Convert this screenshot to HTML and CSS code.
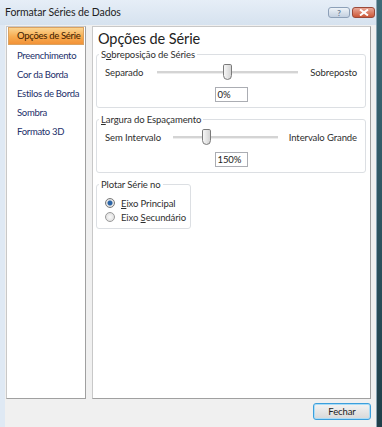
FILE: index.html
```html
<!DOCTYPE html>
<html lang="pt">
<head>
    <meta charset="UTF-8">
    <title>Formatar Séries de Dados</title>
    <link rel="stylesheet" href="styles.css">
</head>
<body>
    <div class="screen">
        <div class="dialog">
            <div class="titlebar">
                <span class="title">Formatar Séries de Dados</span>
                <div class="caption-buttons">
                    <span class="cap-btn help">?</span>
                    <span class="cap-btn close">
                        <svg width="10" height="7" viewBox="0 0 10 7"><path d="M1 0.5 L9 6.5 M9 0.5 L1 6.5" stroke="#fff" stroke-width="2"/></svg>
                    </span>
                </div>
            </div>

            <div class="content">
                <ul class="nav">
                    <li class="active">Opções de Série</li>
                    <li>Preenchimento</li>
                    <li>Cor da Borda</li>
                    <li>Estilos de Borda</li>
                    <li>Sombra</li>
                    <li>Formato 3D</li>
                </ul>

                <div class="panel">
                    <h1>Opções de Série</h1>

                    <fieldset class="group">
                        <legend>S<u>o</u>breposição de Séries</legend>
                        <div class="slider-row">
                            <span class="min-label overlap">Separado</span>
                            <div class="track track-wide"><span class="thumb" style="left: 66px"></span></div>
                            <span class="max-label">Sobreposto</span>
                        </div>
                        <div class="value"><span class="textbox">0%</span></div>
                    </fieldset>

                    <fieldset class="group">
                        <legend><u>L</u>argura do Espaçamento</legend>
                        <div class="slider-row">
                            <span class="min-label gap">Sem Intervalo</span>
                            <div class="track track-narrow"><span class="thumb" style="left: 29px"></span></div>
                            <span class="max-label">Intervalo Grande</span>
                        </div>
                        <div class="value"><span class="textbox">150%</span></div>
                    </fieldset>

                    <fieldset class="group small">
                        <legend>Plotar Série no</legend>
                        <label class="radio"><span class="dot checked"></span><span><u>E</u>ixo Principal</span></label>
                        <label class="radio"><span class="dot"></span><span>Eixo <u>S</u>ecundário</span></label>
                    </fieldset>
                </div>
            </div>

            <div class="footer">
                <button class="btn">Fechar</button>
            </div>
        </div>
        <div class="outside"></div>
    </div>
</body>
</html>
```

FILE: styles.css
```css
body {
    margin: 0;
    font-family: Lato, "Open Sans", sans-serif;
    font-size: 9.5px;
    letter-spacing: -0.1px;
    color: #2e2e2e;
}

.screen {
    display: flex;
    width: 382px;
    height: 427px;
    overflow: hidden;
}

.dialog {
    width: 376px;
    height: 427px;
    display: flex;
    flex-direction: column;
    background: #dfe9f4;
    box-sizing: border-box;
    padding: 0 0 0 5px;
}

.outside {
    flex: 1;
    background: linear-gradient(#3d6a78, #1f3f4a);
    border-left: 1px solid #8aa4b4;
}

.titlebar {
    height: 25px;
    display: flex;
    align-items: flex-start;
    justify-content: space-between;
    margin-left: -5px;
    padding: 0 1px 0 5px;
    box-sizing: border-box;
    background: linear-gradient(#e6eef7, #d6e2ef);
}

.title {
    font-size: 10.5px;
    line-height: 25px;
    color: #1e1e1e;
}

.caption-buttons {
    display: flex;
    gap: 2px;
    padding-top: 7px;
}

.cap-btn {
    height: 11px;
    display: flex;
    align-items: center;
    justify-content: center;
    border: 1px solid #8da0b8;
    border-radius: 3px;
    box-sizing: border-box;
}

.help {
    width: 22px;
    font-size: 8px;
    font-weight: bold;
    color: #6a7f96;
    background: linear-gradient(#eef3f8, #c3d0e0);
}

.close {
    width: 23px;
    border-color: #9b4a3a;
    background: linear-gradient(#eaa898, #cc5838);
}

.content {
    flex: 1;
    display: flex;
    gap: 6px;
    padding: 1px 0 0 1px;
    background: #f0f0f0;
}

.nav {
    list-style: none;
    margin: 0;
    padding: 0 1px;
    width: 80px;
    height: 373px;
    background: #fff;
    border: 1px solid #a0a0a0;
    border-top-color: #c8c8c8;
    border-left-color: #c8c8c8;
    box-sizing: border-box;
}

.nav li {
    height: 19px;
    line-height: 19px;
    padding-left: 9px;
    color: #1d2f6a;
    letter-spacing: -0.3px;
    white-space: nowrap;
}

.nav li.active {
    height: 18px;
    line-height: 16px;
    margin-bottom: 1px;
    padding-left: 8px;
    color: #3b1a00;
    background: linear-gradient(#fbd592, #f7ab4f 55%, #f39238);
    border: 1px solid #dba260;
    box-sizing: border-box;
}

.panel {
    width: 279px;
    height: 373px;
    background: #fff;
    border: 1px solid #a0a0a0;
    border-top-color: #c8c8c8;
    border-left-color: #c8c8c8;
    box-sizing: border-box;
    padding: 3px 4px 0 3px;
}

h1 {
    margin: 0 0 0 2px;
    font-size: 14.5px;
    font-weight: normal;
    color: #222;
    line-height: 18px;
}

.group {
    margin: 0 0 5px 0;
    padding: 3px 8px 0 8px;
    border: 1px solid #dcdfe3;
    border-radius: 3px;
    height: 60px;
    min-width: 0;
    box-sizing: border-box;
}

.group legend {
    padding: 0 2px;
    margin-left: -6px;
    line-height: 13px;
}

.slider-row {
    display: flex;
    align-items: center;
    height: 16px;
    white-space: nowrap;
}

.min-label {
    flex: none;
}

.min-label.overlap {
    width: 52px;
}

.min-label.gap {
    width: 68px;
}

.max-label {
    flex: 1;
    text-align: right;
}

.track {
    position: relative;
    flex: none;
    height: 2px;
    background: #d4d4d4;
    border-bottom: 1px solid #ededed;
}

.track-wide {
    width: 141px;
}

.track-narrow {
    width: 105px;
}

.thumb {
    position: absolute;
    top: -7px;
    width: 9px;
    height: 16px;
    box-sizing: border-box;
    border: 1px solid #7a7a7a;
    border-radius: 2px 2px 5px 5px;
    background: linear-gradient(90deg, #f6f6f6, #d4d4d4);
}

.value {
    display: flex;
    justify-content: center;
    margin-top: 7px;
}

.textbox {
    width: 33px;
    height: 15px;
    line-height: 13px;
    box-sizing: border-box;
    border: 1px solid #abadb3;
    padding-left: 2px;
    color: #222;
}

.small {
    width: 95px;
    height: 51px;
    padding: 5px 2px 0 8px;
}

.radio {
    display: flex;
    align-items: center;
    gap: 6px;
    height: 14px;
    white-space: nowrap;
}

.dot {
    width: 10px;
    height: 10px;
    border-radius: 50%;
    border: 1px solid #9a9a9a;
    box-sizing: border-box;
    background: radial-gradient(#fafafa, #d8d8d8);
}

.dot.checked {
    background: radial-gradient(#2b64a6 0, #2b64a6 2px, #e6e6e6 3px, #d8d8d8);
    border-color: #7a7a7a;
}

.footer {
    height: 28px;
    display: flex;
    justify-content: flex-end;
    align-items: flex-start;
    padding: 4px 5px 0 0;
    background: #f0f0f0;
    box-sizing: border-box;
}

.btn {
    width: 58px;
    height: 17px;
    padding: 0;
    font-family: inherit;
    font-size: 9.5px;
    letter-spacing: -0.1px;
    color: #222;
    background: linear-gradient(#f3f3f3, #e6e6e6 50%, #d8d8d8);
    border: 1px solid #3c9fdc;
    border-radius: 3px;
    box-shadow: inset 0 0 0 1px #a9dcf7;
}
```
